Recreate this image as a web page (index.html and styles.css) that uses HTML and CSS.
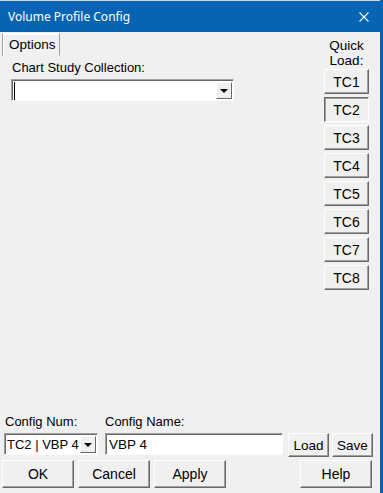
FILE: index.html
```
<!DOCTYPE html>
<html>
<head>
  <title>Volume Profile Config</title>
  <meta name="viewport" content="width=device-width, initial-scale=1">
  <link rel="stylesheet" href="styles.css">
</head>
<body>
  <div class="window">
    <div class="titlebar">
      <span class="title">Volume Profile Config</span>
      <svg class="close" width="10" height="10" viewBox="0 0 10 10">
        <path d="M0.5 0.5 L9.5 9.5 M9.5 0.5 L0.5 9.5" stroke="#fff" stroke-width="1.1" fill="none"/>
      </svg>
    </div>

    <div class="client">
      <div class="main">
        <div class="pane">
          <div class="tabs"><span class="tab">Options</span></div>
          <div class="field-label">Chart Study Collection:</div>
          <div class="combo study">
            <span class="caret"></span>
            <span class="drop"><i class="arrow"></i></span>
          </div>
        </div>

        <div class="quick">
          <div class="quick-label">Quick<br>Load:</div>
          <button class="btn tc">TC1</button>
          <button class="btn tc pressed">TC2</button>
          <button class="btn tc">TC3</button>
          <button class="btn tc">TC4</button>
          <button class="btn tc">TC5</button>
          <button class="btn tc">TC6</button>
          <button class="btn tc">TC7</button>
          <button class="btn tc">TC8</button>
        </div>
      </div>

      <div class="config">
        <div class="group num">
          <div class="small-label">Config Num:</div>
          <div class="combo num-combo">
            <span class="value">TC2 | VBP 4</span>
            <span class="drop"><i class="arrow"></i></span>
          </div>
        </div>
        <div class="group name">
          <div class="small-label">Config Name:</div>
          <div class="edit">VBP 4</div>
        </div>
        <div class="group file-btns">
          <button class="btn small">Load</button>
          <button class="btn small">Save</button>
        </div>
      </div>

      <div class="actions">
        <button class="btn action">OK</button>
        <button class="btn action">Cancel</button>
        <button class="btn action">Apply</button>
        <button class="btn action help">Help</button>
      </div>
    </div>
  </div>
</body>
</html>
```

FILE: styles.css
```
body { margin: 0; font-family: "Liberation Sans", Arial, sans-serif; font-size: 13px; color: #000; }
.window { width: 380px; height: 493px; border-right: 3px solid #0764b4; background: #f0f0f0; display: flex; flex-direction: column; }

.titlebar { height: 31px; border-top: 1px solid #c9d6e4; background: #0764b4; display: flex; align-items: center; padding: 0 11px 0 8px; }
.title { flex: 1; color: #fff; font-family: "Noto Sans", sans-serif; font-size: 12px; }
.close { display: block; }

.client { flex: 1; display: flex; flex-direction: column; }
.main { flex: 1; display: flex; }

.pane { flex: 1; padding-left: 2px; }
.tabs { margin-top: 1px; height: 23px; }
.tab {
  display: inline-block;
  box-sizing: border-box;
  height: 23px;
  width: 58px;
  padding: 3px 0 0 6px;
  font-size: 13.5px;
  border: 1px solid;
  border-color: #fff #a0a0a0 #f0f0f0 #a0a0a0;
  box-shadow: inset 1px 1px #fff;
}
.field-label { margin: 4px 0 0 10px; line-height: 15px; }

.combo, .edit {
  box-sizing: border-box;
  height: 22px;
  background: #fff;
  border: 1px solid;
  border-color: #a0a0a0 #fff #fff #a0a0a0;
  box-shadow: inset 1px 1px #696969;
  display: flex;
  align-items: center;
  position: relative;
}
.study { margin: 4px 0 0 9px; width: 223px; }
.caret { margin-left: 2px; margin-top: 1px; width: 1px; height: 18px; background: #000; }
.drop {
  position: absolute;
  right: 1px;
  top: 2px;
  bottom: 1px;
  width: 16px;
  box-sizing: border-box;
  background: #f0f0f0;
  border: 1px solid;
  border-color: #fff #696969 #696969 #fff;
  display: flex;
  align-items: center;
  justify-content: center;
}
.arrow { width: 0; height: 0; border-left: 4px solid transparent; border-right: 4px solid transparent; border-top: 4px solid #000; }

.btn {
  box-sizing: border-box;
  background: #f0f0f0;
  border: 1px solid;
  border-color: #fff #696969 #696969 #fff;
  box-shadow: inset -1px -1px #a0a0a0;
  font-family: "Liberation Sans", Arial, sans-serif;
  font-size: 13px;
  color: #000;
  padding: 0;
}
.btn.pressed { border-color: #696969 #fff #fff #696969; box-shadow: inset 1px 1px #a0a0a0; }

.quick { width: 45px; margin-right: 11px; padding-top: 6px; display: flex; flex-direction: column; align-items: center; }
.quick-label { line-height: 15px; text-align: center; white-space: nowrap; margin-bottom: 1px; font-size: 13.5px; }
.tc { width: 45px; height: 25px; margin-bottom: 3px; font-size: 14px; }

.config { display: flex; align-items: flex-start; }
.small-label { line-height: 15px; margin-bottom: 4px; }
.num { margin-left: 4px; width: 94px; }
.num .small-label { padding-left: 1px; }
.num-combo .value { padding-left: 2px; white-space: nowrap; }
.name { margin-left: 7px; width: 178px; }
.edit { padding-left: 3px; font-size: 13.5px; }
.file-btns { margin-left: 5px; padding-top: 19px; display: flex; gap: 3px; }
.small { width: 41px; height: 24px; font-size: 13.5px; }

.actions { display: flex; gap: 4px; margin: 3px 8px 5px 2px; }
.action { width: 72px; height: 28px; font-size: 14px; }
.help { margin-left: auto; }
```
